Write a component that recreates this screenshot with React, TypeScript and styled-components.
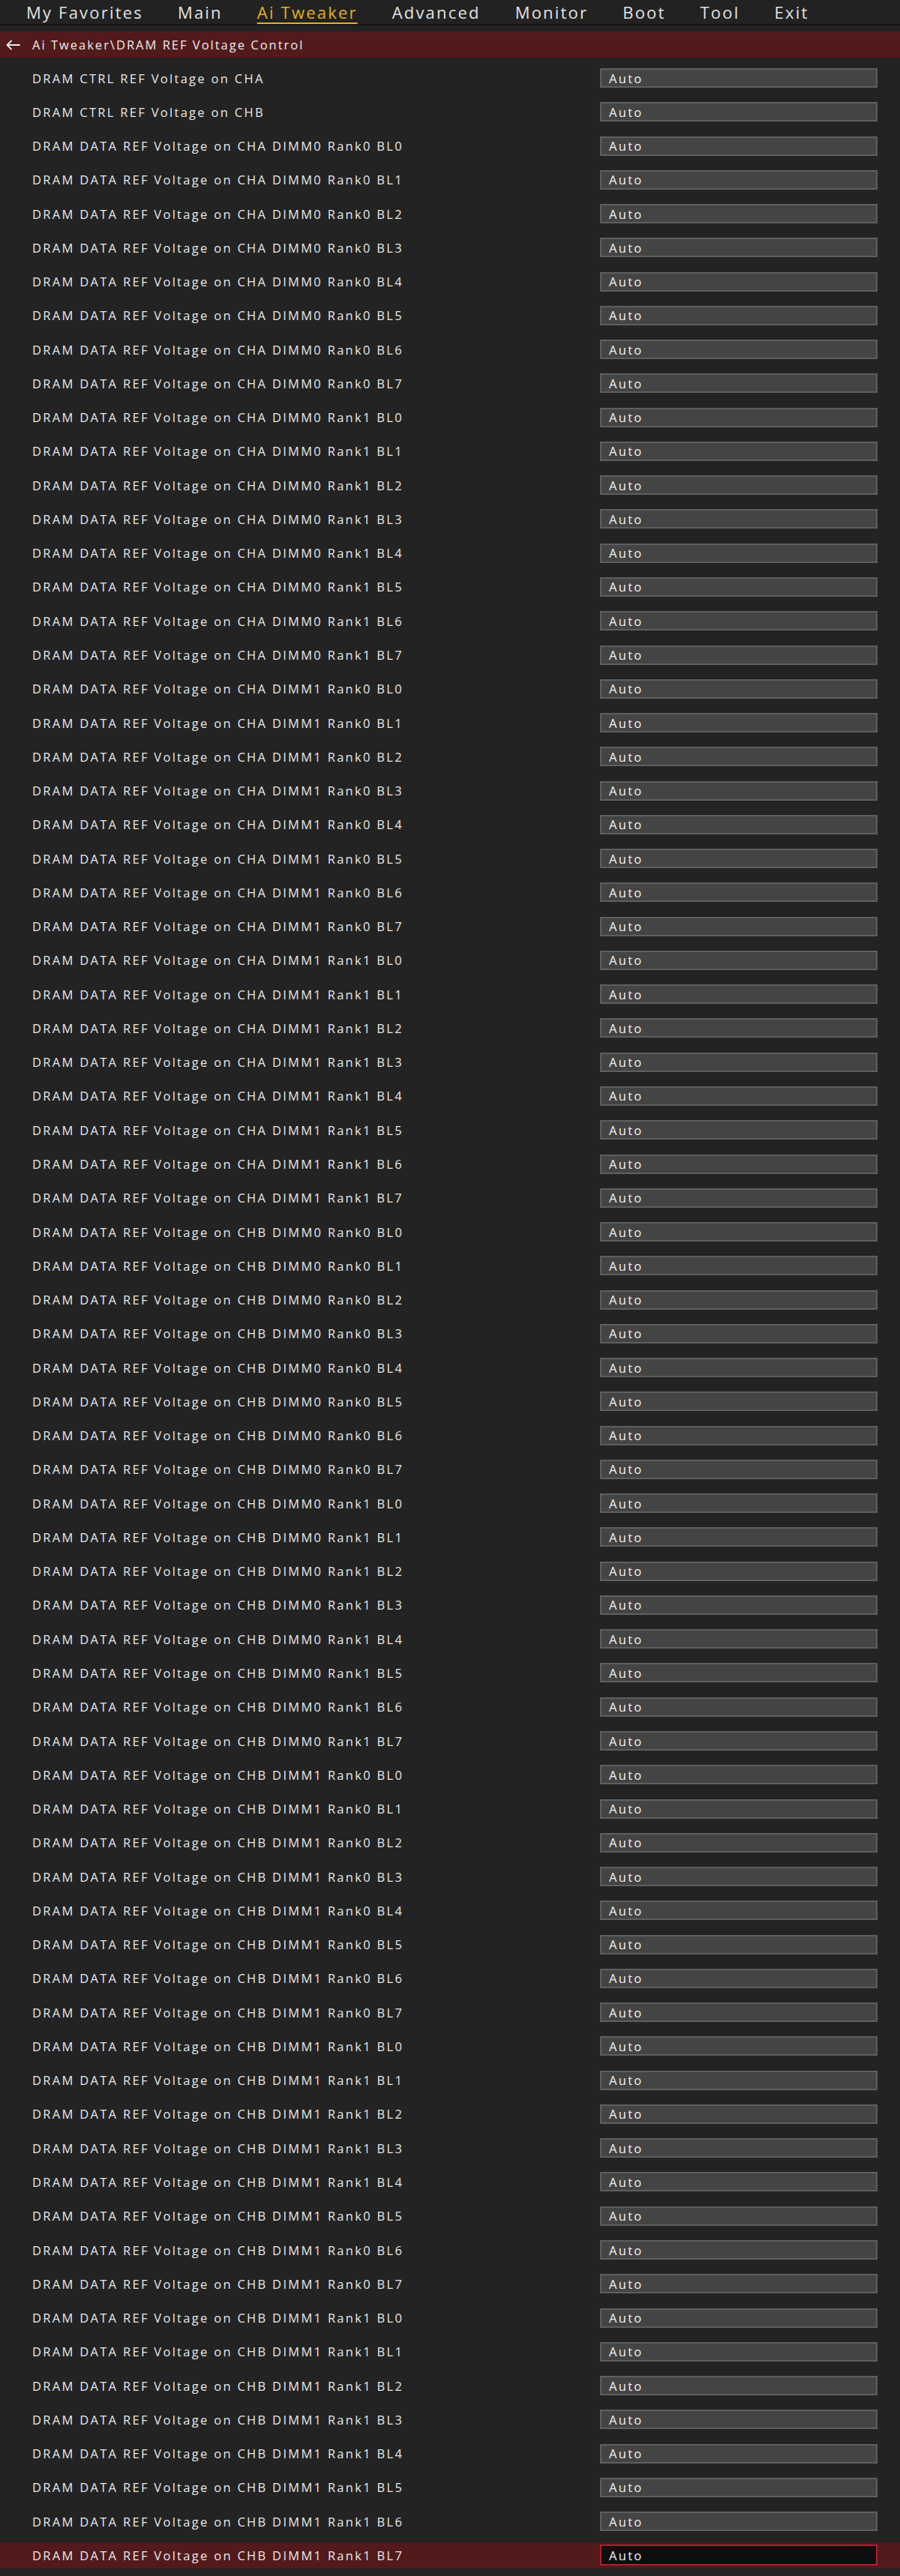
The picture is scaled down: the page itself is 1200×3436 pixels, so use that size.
import React from "react";
import styled, { createGlobalStyle } from "styled-components";

const GlobalStyle = createGlobalStyle`
  html, body {
    margin: 0;
    padding: 0;
    background: #232323;
  }
  * { box-sizing: border-box; }
`;

const Page = styled.div`
  width: 1200px;
  min-height: 3436px;
  background: #232323;
  font-family: "Open Sans", "Noto Sans", sans-serif;
  color: #e6e6e6;
  display: flex;
  flex-direction: column;
`;

const NavBar = styled.nav`
  height: 34px;
  display: flex;
  align-items: center;
  gap: 46px;
  padding-left: 35px;
  border-bottom: 2px solid #141414;
  background: #222222;
`;

const NavItem = styled.span<{ $active?: boolean }>`
  font-size: 22px;
  letter-spacing: 2.2px;
  line-height: 30px;
  color: ${(p) => (p.$active ? "#e3b312" : "#e2e2e2")};
  text-decoration: ${(p) => (p.$active ? "underline" : "none")};
  text-decoration-thickness: 2px;
  text-underline-offset: 5px;
  white-space: nowrap;
`;

const Breadcrumb = styled.div`
  margin-top: 8px;
  height: 35px;
  background: #521a1b;
  display: flex;
  align-items: center;
  padding-left: 7px;
  gap: 16px;
`;

const BreadcrumbText = styled.span`
  font-size: 16.5px;
  letter-spacing: 2px;
  color: #ececec;
  white-space: nowrap;
`;

const List = styled.div`
  display: flex;
  flex-direction: column;
  gap: 10.27px;
  padding-top: 9.5px;
  padding-bottom: 9px;
`;

const Row = styled.div<{ $selected?: boolean }>`
  height: 35px;
  display: flex;
  align-items: center;
  padding-left: 43px;
  padding-right: 30px;
  background: ${(p) => (p.$selected ? "#521a1b" : "transparent")};
`;

const Label = styled.span`
  flex: 1;
  font-size: 16.5px;
  letter-spacing: 2.3px;
  color: #e8e8e8;
  white-space: nowrap;
`;

const ValueBox = styled.div<{ $selected?: boolean }>`
  width: 370px;
  height: ${(p) => (p.$selected ? "28px" : "26px")};
  display: flex;
  align-items: center;
  padding-left: 10px;
  background: ${(p) => (p.$selected ? "#0e0e0e" : "#444444")};
  border: 2px solid ${(p) => (p.$selected ? "#b11e33" : "#5f5f5f")};
  font-size: 16.5px;
  letter-spacing: 2.3px;
  color: #f2f2f2;
  white-space: nowrap;
`;

const BackArrow = () => (
  <svg width="20" height="14" viewBox="0 0 20 14" fill="none">
    <path d="M19 7H2.5M8 1.5L2.5 7L8 12.5" stroke="#ececec" strokeWidth="1.8" strokeLinecap="round" strokeLinejoin="round" />
  </svg>
);

const navItems = ["My Favorites", "Main", "Ai Tweaker", "Advanced", "Monitor", "Boot", "Tool", "Exit"];

function buildRows(): string[] {
  const rows: string[] = ["DRAM CTRL REF Voltage on CHA", "DRAM CTRL REF Voltage on CHB"];
  const base = "DRAM DATA REF Voltage on";
  const groups: [string, number, number][] = [
    ["CHA", 0, 0],
    ["CHA", 0, 1],
    ["CHA", 1, 0],
    ["CHA", 1, 1],
    ["CHB", 0, 0],
    ["CHB", 0, 1],
    ["CHB", 1, 0],
  ];
  for (const [ch, dimm, rank] of groups) {
    for (let bl = 0; bl < 8; bl++) rows.push(`${base} ${ch} DIMM${dimm} Rank${rank} BL${bl}`);
  }
  for (let bl = 0; bl < 5; bl++) rows.push(`${base} CHB DIMM1 Rank1 BL${bl}`);
  for (let bl = 5; bl < 8; bl++) rows.push(`${base} CHB DIMM1 Rank0 BL${bl}`);
  for (let bl = 0; bl < 8; bl++) rows.push(`${base} CHB DIMM1 Rank1 BL${bl}`);
  return rows;
}

const rows = buildRows();

export default function App() {
  return (
    <Page>
      <GlobalStyle />
      <NavBar>
        {navItems.map((n) => (
          <NavItem key={n} $active={n === "Ai Tweaker"}>
            {n}
          </NavItem>
        ))}
      </NavBar>
      <Breadcrumb>
        <BackArrow />
        <BreadcrumbText>Ai Tweaker\DRAM REF Voltage Control</BreadcrumbText>
      </Breadcrumb>
      <List>
        {rows.map((r, i) => {
          const selected = i === rows.length - 1;
          return (
            <Row key={i} $selected={selected}>
              <Label>{r}</Label>
              <ValueBox $selected={selected}>Auto</ValueBox>
            </Row>
          );
        })}
      </List>
    </Page>
  );
}
